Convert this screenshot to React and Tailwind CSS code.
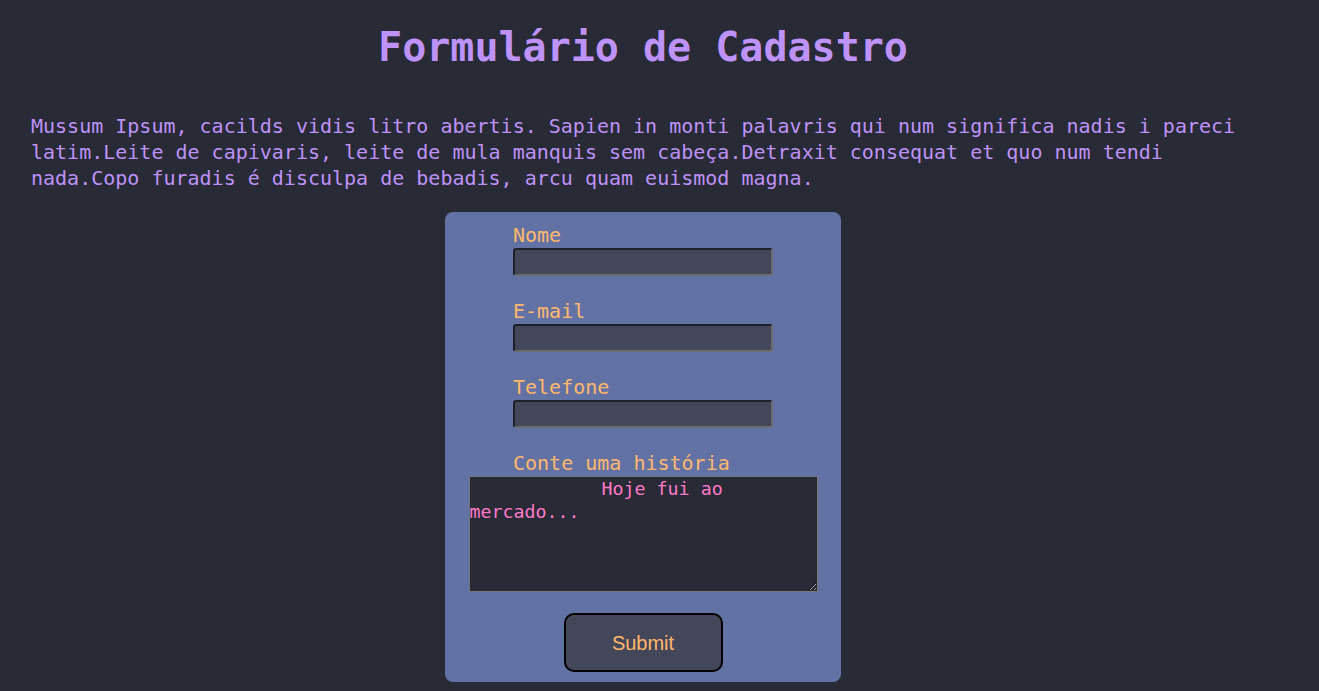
import React from 'react';

const fields = ['Nome', 'E-mail', 'Telefone'];

export default function App() {
  return (
    <div className="min-h-screen bg-[#282a36] pl-[31px] pr-[64px] pt-[23px] font-['DejaVu_Sans_Mono',monospace]">
      <h1 className="text-center text-[40px] leading-[48px] font-bold text-[#bd93f9]">
        Formulário de Cadastro
      </h1>

      <p className="mt-[42px] text-[20px] leading-[26px] text-[#bd93f9]">
        Mussum Ipsum, cacilds vidis litro abertis. Sapien in monti palavris qui num significa nadis i pareci
        latim.Leite de capivaris, leite de mula manquis sem cabeça.Detraxit consequat et quo num tendi
        nada.Copo furadis é disculpa de bebadis, arcu quam euismod magna.
      </p>

      <form
        className="mx-auto mt-[21px] flex w-[396px] flex-col items-center rounded-lg bg-[#6272a4] pt-[10px] pb-[10px]"
        onSubmit={(e) => e.preventDefault()}
      >
        {fields.map((f) => (
          <div key={f} className="mb-[22px] w-[260px]">
            <label className="block text-[20px] leading-[26px] text-[#ffb86c]">{f}</label>
            <input
              type="text"
              className="block h-[28px] w-full rounded-[3px] border-2 border-t-[#1e1f29] border-l-[#1e1f29] border-r-[#6b6b6b] border-b-[#6b6b6b] bg-[#44475a] px-1 text-[16px] text-[#f8f8f2] outline-none"
            />
          </div>
        ))}

        {/* história */}
        <label className="block w-[260px] text-[20px] leading-[26px] text-[#ffb86c]">Conte uma história</label>
        <textarea
          defaultValue={'            Hoje fui ao mercado...'}
          className="h-[116px] w-[349px] border border-[#767676] bg-[#282a36] p-0 text-[18.3px] leading-[23px] text-[#ff79c6] outline-none"
        />

        <button
          type="submit"
          className="mt-[21px] h-[59px] w-[159px] rounded-[10px] border-2 border-black bg-[#44475a] font-['Liberation_Sans',Arial,sans-serif] text-[20px] text-[#ffb86c]"
        >
          Submit
        </button>
      </form>
    </div>
  );
}
